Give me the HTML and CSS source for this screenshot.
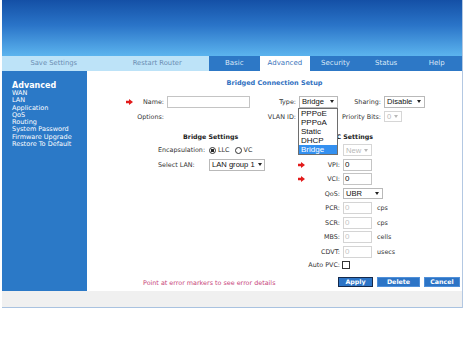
FILE: index.html
```
<!DOCTYPE HTML>
<html>
<head>
<meta charset="UTF-8">
<title>Bridged Connection Setup</title>
<link rel="stylesheet" href="styles.css">
</head>
<body>
<div class="page">
	<div class="header"></div>

	<div class="nav">
		<div class="nav-links">
			<a>Save Settings</a>
			<a>Restart Router</a>
		</div>
		<div class="tabs">
			<a class="tab">Basic</a>
			<a class="tab active">Advanced</a>
			<a class="tab">Security</a>
			<a class="tab">Status</a>
			<a class="tab">Help</a>
		</div>
	</div><!-- end of nav -->

	<div class="main">
		<div class="sidebar">
			<h2>Advanced</h2>
			<ul>
				<li>WAN</li>
				<li>LAN</li>
				<li>Application</li>
				<li>QoS</li>
				<li>Routing</li>
				<li>System Password</li>
				<li>Firmware Upgrade</li>
				<li>Restore To Default</li>
			</ul>
		</div><!-- end of sidebar -->

		<div class="content">
			<h1 class="title">Bridged Connection Setup</h1>

			<div class="conn-grid">
				<span class="mark"><svg width="7" height="6" viewBox="0 0 7 6"><polygon points="0,1.8 3,1.8 3,0 7,3 3,6 3,4.2 0,4.2" fill="#e21b1b"/></svg></span>
				<span class="lbl">Name:</span>
				<span class="fld"><span class="input name-input"></span></span>
				<span class="lbl">Type:</span>
				<span class="fld drop-anchor">
					<span class="select type-select">Bridge<i class="caret"></i></span>
					<span class="droplist">
						<span>PPPoE</span>
						<span>PPPoA</span>
						<span>Static</span>
						<span>DHCP</span>
						<span class="hl">Bridge</span>
					</span>
				</span>
				<span class="lbl">Sharing:</span>
				<span class="fld"><span class="select share-select">Disable<i class="caret"></i></span></span>

				<span></span>
				<span class="lbl">Options:</span>
				<span></span>
				<span class="lbl">VLAN ID:</span>
				<span></span>
				<span class="lbl">Priority Bits:</span>
				<span class="fld"><span class="select disabled prio-select">0<i class="caret"></i></span></span>
			</div><!-- end of conn-grid -->

			<div class="settings">
				<span class="sec bridge-title">Bridge Settings</span>
				<span class="sec pvc-title">PVC Settings</span>

				<span class="encap">
					<span class="encap-lbl">Encapsulation:</span>
					<span class="radio checked"></span><span>LLC</span>
					<span class="radio second"></span><span>VC</span>
				</span>
				<span></span><span></span>
				<span class="fld"><span class="select disabled new-select">New<i class="caret"></i></span></span>

				<span class="left-lbl">Select LAN:</span>
				<span class="left-fld"><span class="select lan-select">LAN group 1<i class="caret"></i></span></span>
				<span class="mark"><svg width="7" height="6" viewBox="0 0 7 6"><polygon points="0,1.8 3,1.8 3,0 7,3 3,6 3,4.2 0,4.2" fill="#e21b1b"/></svg></span>
				<span class="lbl">VPI:</span>
				<span class="fld"><span class="input small-input">0</span></span>

				<span></span><span></span>
				<span class="mark"><svg width="7" height="6" viewBox="0 0 7 6"><polygon points="0,1.8 3,1.8 3,0 7,3 3,6 3,4.2 0,4.2" fill="#e21b1b"/></svg></span>
				<span class="lbl">VCI:</span>
				<span class="fld"><span class="input small-input">0</span></span>

				<span></span><span></span><span></span>
				<span class="lbl">QoS:</span>
				<span class="fld"><span class="select qos-select">UBR<i class="caret"></i></span></span>

				<span></span><span></span><span></span>
				<span class="lbl">PCR:</span>
				<span class="fld"><span class="input small-input disabled">0</span><span class="unit">cps</span></span>

				<span></span><span></span><span></span>
				<span class="lbl">SCR:</span>
				<span class="fld"><span class="input small-input disabled">0</span><span class="unit">cps</span></span>

				<span></span><span></span><span></span>
				<span class="lbl">MBS:</span>
				<span class="fld"><span class="input small-input disabled">0</span><span class="unit">cells</span></span>

				<span></span><span></span><span></span>
				<span class="lbl">CDVT:</span>
				<span class="fld"><span class="input small-input disabled">0</span><span class="unit">usecs</span></span>

				<span></span><span></span><span></span>
				<span class="lbl">Auto PVC:</span>
				<span class="fld"><span class="checkbox"></span></span>
			</div><!-- end of settings -->

			<div class="actions">
				<span class="error-hint">Point at error markers to see error details</span>
				<span class="buttons">
					<button class="btn apply">Apply</button>
					<button class="btn delete">Delete</button>
					<button class="btn cancel">Cancel</button>
				</span>
			</div>
		</div><!-- end of content -->
	</div><!-- end of main -->

	<div class="footer"></div>
</div><!-- end of page -->
</body>
</html>
```

FILE: styles.css
```
body{
	margin:0;
	padding:0;
	background:#fff;
	font-family:"DejaVu Sans", Verdana, sans-serif;
	font-size:6.4px;
	color:#333;
}
.page{
	width:460px;
	margin-left:2px;
	border-right:1px solid #b3c8e2;
}
.header{
	height:56px;
	background:linear-gradient(#1450a6, #2a74c8 45%, #5cb4ee);
}

/* nav */
.nav{
	display:flex;
	height:15px;
}
.nav-links{
	width:207px;
	display:grid;
	grid-template-columns:1fr 1fr;
	background:#bde3f8;
}
.nav-links a{
	font-size:6.8px;
	line-height:15px;
	text-align:center;
	color:#6b8db2;
}
.tabs{
	flex:1;
	display:grid;
	grid-template-columns:repeat(5, 1fr);
	background:#2d78c6;
}
.tab{
	font-size:7px;
	line-height:15px;
	text-align:center;
	color:#dce9f7;
}
.tab.active{
	background:#fff;
	color:#3a74bb;
}

/* main */
.main{
	display:flex;
	height:220px;
}
.sidebar{
	width:75px;
	padding:10px 0 0 10px;
	background:#2b79c7;
	color:#fff;
}
.sidebar h2{
	margin:0;
	font-size:8px;
	line-height:9px;
}
.sidebar ul{
	margin:0;
	padding:0;
	list-style:none;
}
.sidebar li{
	font-size:6.5px;
	line-height:7.3px;
}
.content{
	flex:1;
	background:#fff;
}
.title{
	margin:0;
	padding-top:8px;
	font-size:6.5px;
	line-height:8px;
	text-align:center;
	color:#2f6fc0;
}

/* top grid */
.conn-grid{
	display:grid;
	grid-template-columns:10px 29px 86px 46px 41px 44px 43px;
	grid-auto-rows:15px;
	align-items:center;
	margin-top:7px;
	padding-left:39px;
}
.mark{
	display:flex;
	align-items:center;
}
.lbl{
	text-align:right;
	white-space:nowrap;
	padding-right:1px;
}
.fld{
	display:flex;
	align-items:center;
	padding-left:2px;
	white-space:nowrap;
}
.drop-anchor{
	position:relative;
}

/* fake controls */
.input{
	box-sizing:border-box;
	height:12px;
	border:1px solid #c4c4c4;
	background:#fff;
	font-family:"Liberation Sans", Arial, sans-serif;
	font-size:8px;
	line-height:10px;
	padding-left:1px;
	color:#111;
}
.input.disabled{
	color:#c4c4c4;
	border-color:#d4d4d4;
}
.name-input{ width:83px; }
.small-input{ width:29px; }
.select{
	box-sizing:border-box;
	display:flex;
	align-items:center;
	justify-content:space-between;
	height:12px;
	border:1px solid #b9b9b9;
	background:#fff;
	font-family:"Liberation Sans", Arial, sans-serif;
	font-size:7.6px;
	white-space:nowrap;
	padding:0 3px 0 2px;
	color:#111;
}
.select.disabled{
	color:#b8b8b8;
	border-color:#d6d6d6;
}
.caret{
	flex:none;
	width:0;
	height:0;
	margin-left:3px;
	border-left:2.5px solid transparent;
	border-right:2.5px solid transparent;
	border-top:3px solid #222;
}
.select.disabled .caret{
	border-top-color:#b8b8b8;
}
.type-select{ width:39px; }
.share-select{ width:41px; }
.prio-select{ width:18px; height:11px; }
.new-select{ width:29px; }
.lan-select{ width:56px; }
.qos-select{ width:40px; height:11px; }

/* open list of the type select */
.droplist{
	position:absolute;
	top:12px;
	left:1px;
	z-index:5;
	width:40px;
	box-sizing:border-box;
	border:1px solid #6e6e6e;
	background:#fff;
	display:flex;
	flex-direction:column;
}
.droplist span{
	font-family:"Liberation Sans", Arial, sans-serif;
	font-size:8px;
	line-height:9px;
	padding-left:2px;
	color:#111;
}
.droplist .hl{
	background:#3390f0;
	color:#fff;
}

/* settings */
.settings{
	display:grid;
	grid-template-columns:51px 83px 14px 35px 1fr;
	grid-template-rows:13px repeat(8, 14.5px) 12px;
	align-items:center;
	margin-top:6px;
	padding-left:71px;
}
.sec{
	font-weight:bold;
	font-size:6.3px;
	color:#222;
	white-space:nowrap;
}
.bridge-title{
	grid-column:1 / 3;
	padding-left:25px;
}
.pvc-title{
	grid-column:3 / 6;
	padding-left:35px;
}
.settings .mark{
	padding-left:6px;
}
.encap{
	grid-column:1 / 3;
	display:flex;
	align-items:center;
}
.encap-lbl{
	width:51px;
	white-space:nowrap;
}
.radio{
	box-sizing:border-box;
	width:7px;
	height:7px;
	margin-right:2px;
	border:1px solid #333;
	border-radius:50%;
	background:#fff;
}
.radio.checked{
	background:radial-gradient(circle, #222 1.4px, #fff 1.8px);
}
.radio.second{
	margin-left:5px;
}
.left-lbl{
	white-space:nowrap;
}
.left-fld{
	display:flex;
}
.unit{
	margin-left:5px;
	color:#333;
}
.checkbox{
	box-sizing:border-box;
	width:8px;
	height:8px;
	border:1px solid #333;
	background:#fff;
	margin-left:-1px;
}

/* actions */
.actions{
	display:flex;
	align-items:center;
	justify-content:space-between;
	margin-top:6px;
	padding:0 2px 0 56px;
}
.error-hint{
	color:#c8457a;
	padding-top:1px;
}
.buttons{
	display:flex;
	gap:4px;
}
.btn{
	box-sizing:border-box;
	height:10px;
	padding:0;
	border:1px solid #4f8fd8;
	background:#2c74c6;
	color:#fff;
	font-family:"DejaVu Sans", Verdana, sans-serif;
	font-size:6.3px;
	font-weight:bold;
	line-height:8px;
}
.btn.apply{
	width:35px;
	border-color:#15294a;
}
.btn.delete{ width:43px; }
.btn.cancel{ width:36px; }

.footer{
	height:16px;
	background:#f0f0f0;
	border-bottom:1px solid #a9c2e0;
}
```
